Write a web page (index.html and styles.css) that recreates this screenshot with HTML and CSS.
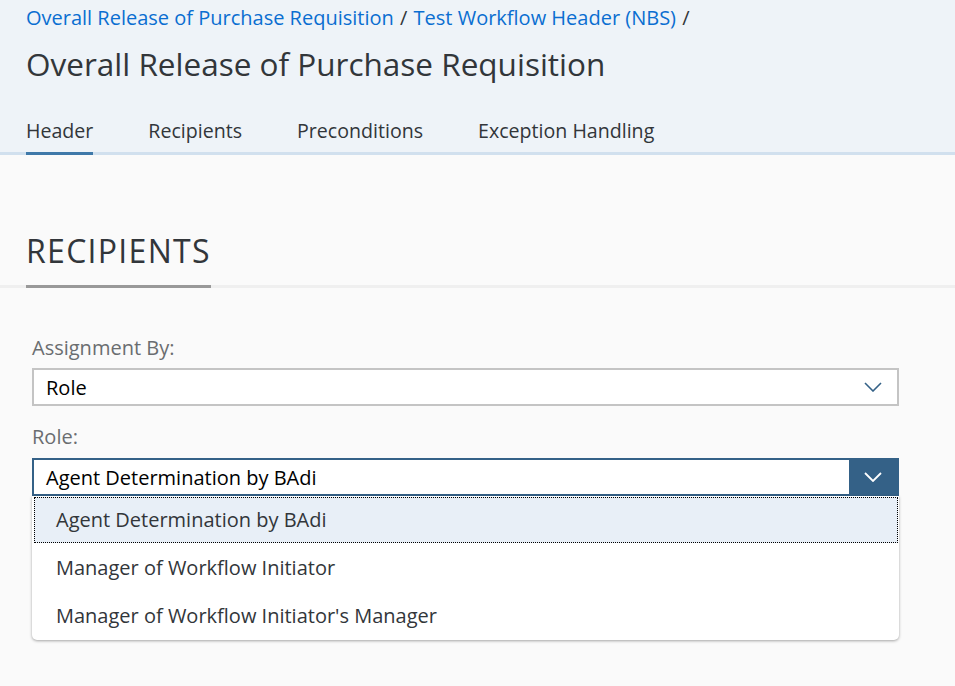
FILE: index.html
```html
<!DOCTYPE html>
<html>
<head>
<meta charset="utf-8">
<link rel="stylesheet" href="styles.css">
</head>
<body>
<header class="page-header">
  <nav class="breadcrumb">
    <a class="crumb">Overall Release of Purchase Requisition</a>
    <span class="sep">/</span>
    <a class="crumb">Test Workflow Header (NBS)</a>
    <span class="sep">/</span>
  </nav>
  <h1 class="title">Overall Release of Purchase Requisition</h1>
  <div class="tabs">
    <div class="tab active">Header</div>
    <div class="tab">Recipients</div>
    <div class="tab">Preconditions</div>
    <div class="tab">Exception Handling</div>
  </div>
</header>
<main class="content">
  <div class="section-head">
    <h2 class="section-title">RECIPIENTS</h2>
  </div>
  <div class="form">
    <label class="label">Assignment By:</label>
    <div class="select">
      <span class="select-value">Role</span>
      <span class="select-arrow">
        <svg width="18" height="10" viewBox="0 0 18 10"><path d="M1 1 L9 9 L17 1" fill="none" stroke="#346187" stroke-width="1.6"/></svg>
      </span>
    </div>
    <label class="label label-role">Role:</label>
    <div class="select-wrap">
      <div class="select focused">
        <span class="select-value">Agent Determination by BAdi</span>
        <span class="select-arrow pressed">
          <svg width="18" height="10" viewBox="0 0 18 10"><path d="M1 1 L9 9 L17 1" fill="none" stroke="#ffffff" stroke-width="1.8"/></svg>
        </span>
      </div>
      <ul class="popup">
        <li class="item selected">Agent Determination by BAdi</li>
        <li class="item">Manager of Workflow Initiator</li>
        <li class="item">Manager of Workflow Initiator's Manager</li>
      </ul>
    </div>
  </div>
</main>
</body>
</html>
```
FILE: styles.css
```css
* { box-sizing: border-box; }
html, body { margin: 0; padding: 0; }
body {
  background: #fafafa;
  font-family: "Open Sans", "Noto Sans", sans-serif;
  color: #32363a;
  width: 955px;
  height: 686px;
  overflow: hidden;
}
.page-header {
  background: #eef3f8;
  padding-left: 26px;
  border-bottom: 3px solid #d1e0ee;
}
.breadcrumb {
  height: 36px;
  line-height: 36px;
  font-size: 20px;
  white-space: nowrap;
}
.crumb { color: #0a6ed1; text-decoration: none; }
.sep { color: #32363a; margin: 0 1px; }
.title {
  margin: 8px 0 0;
  height: 40px;
  line-height: 40px;
  font-size: 31.5px;
  font-weight: 400;
  color: #32363a;
}
.tabs {
  display: flex;
  gap: 55px;
  height: 71px;
  align-items: flex-end;
  margin-bottom: -3px;
}
.tab {
  font-size: 19.6px;
  line-height: 24px;
  padding-bottom: 9px;
  border-bottom: 3px solid transparent;
  color: #32363a;
}
.tab.active {
  border-bottom-color: #3f79a9;
}
.section-head {
  border-bottom: 3px solid #efefef;
  padding-left: 26px;
  padding-top: 76px;
}
.section-title {
  display: inline-block;
  margin: 0 0 -3px;
  font-size: 32px;
  font-weight: 400;
  line-height: 40px;
  padding-bottom: 14px;
  border-bottom: 3px solid #999999;
  color: #32363a;
  letter-spacing: 1.3px;
}
.form {
  padding: 48px 0 0 32px;
  width: 899px;
}
.label {
  display: block;
  font-size: 20px;
  line-height: 24px;
  color: #6a6d70;
  margin-bottom: 8px;
}
.label-role {
  margin-top: 19px;
  margin-bottom: 9px;
}
.select {
  display: flex;
  align-items: center;
  height: 38px;
  width: 867px;
  background: #fff;
  border: 2px solid #c4c4c4;
  font-size: 20px;
  color: #000;
}
.select-value {
  flex: 1;
  padding-left: 12px;
}
.select-arrow {
  width: 48px;
  height: 100%;
  display: flex;
  align-items: center;
  justify-content: center;
}
.select.focused { border-color: #346187; }
.select-arrow.pressed { background: #346187; }
.select-wrap { position: relative; }
.popup {
  position: absolute;
  left: 0;
  top: 38px;
  width: 867px;
  margin: 0;
  padding: 0;
  list-style: none;
  background: #fff;
  border-radius: 0 0 5px 5px;
  box-shadow: 0 1px 3px rgba(0,0,0,0.35);
}
.item {
  height: 48px;
  line-height: 46px;
  padding-left: 23px;
  font-size: 20px;
  color: #32363a;
  border: 1px solid transparent;
}
.item.selected {
  background: #e8eff7;
  border: 1px dotted #000;
  height: 46px;
  margin: 1px 1px 1px 2px;
  line-height: 44px;
  padding-left: 21px;
}
```
